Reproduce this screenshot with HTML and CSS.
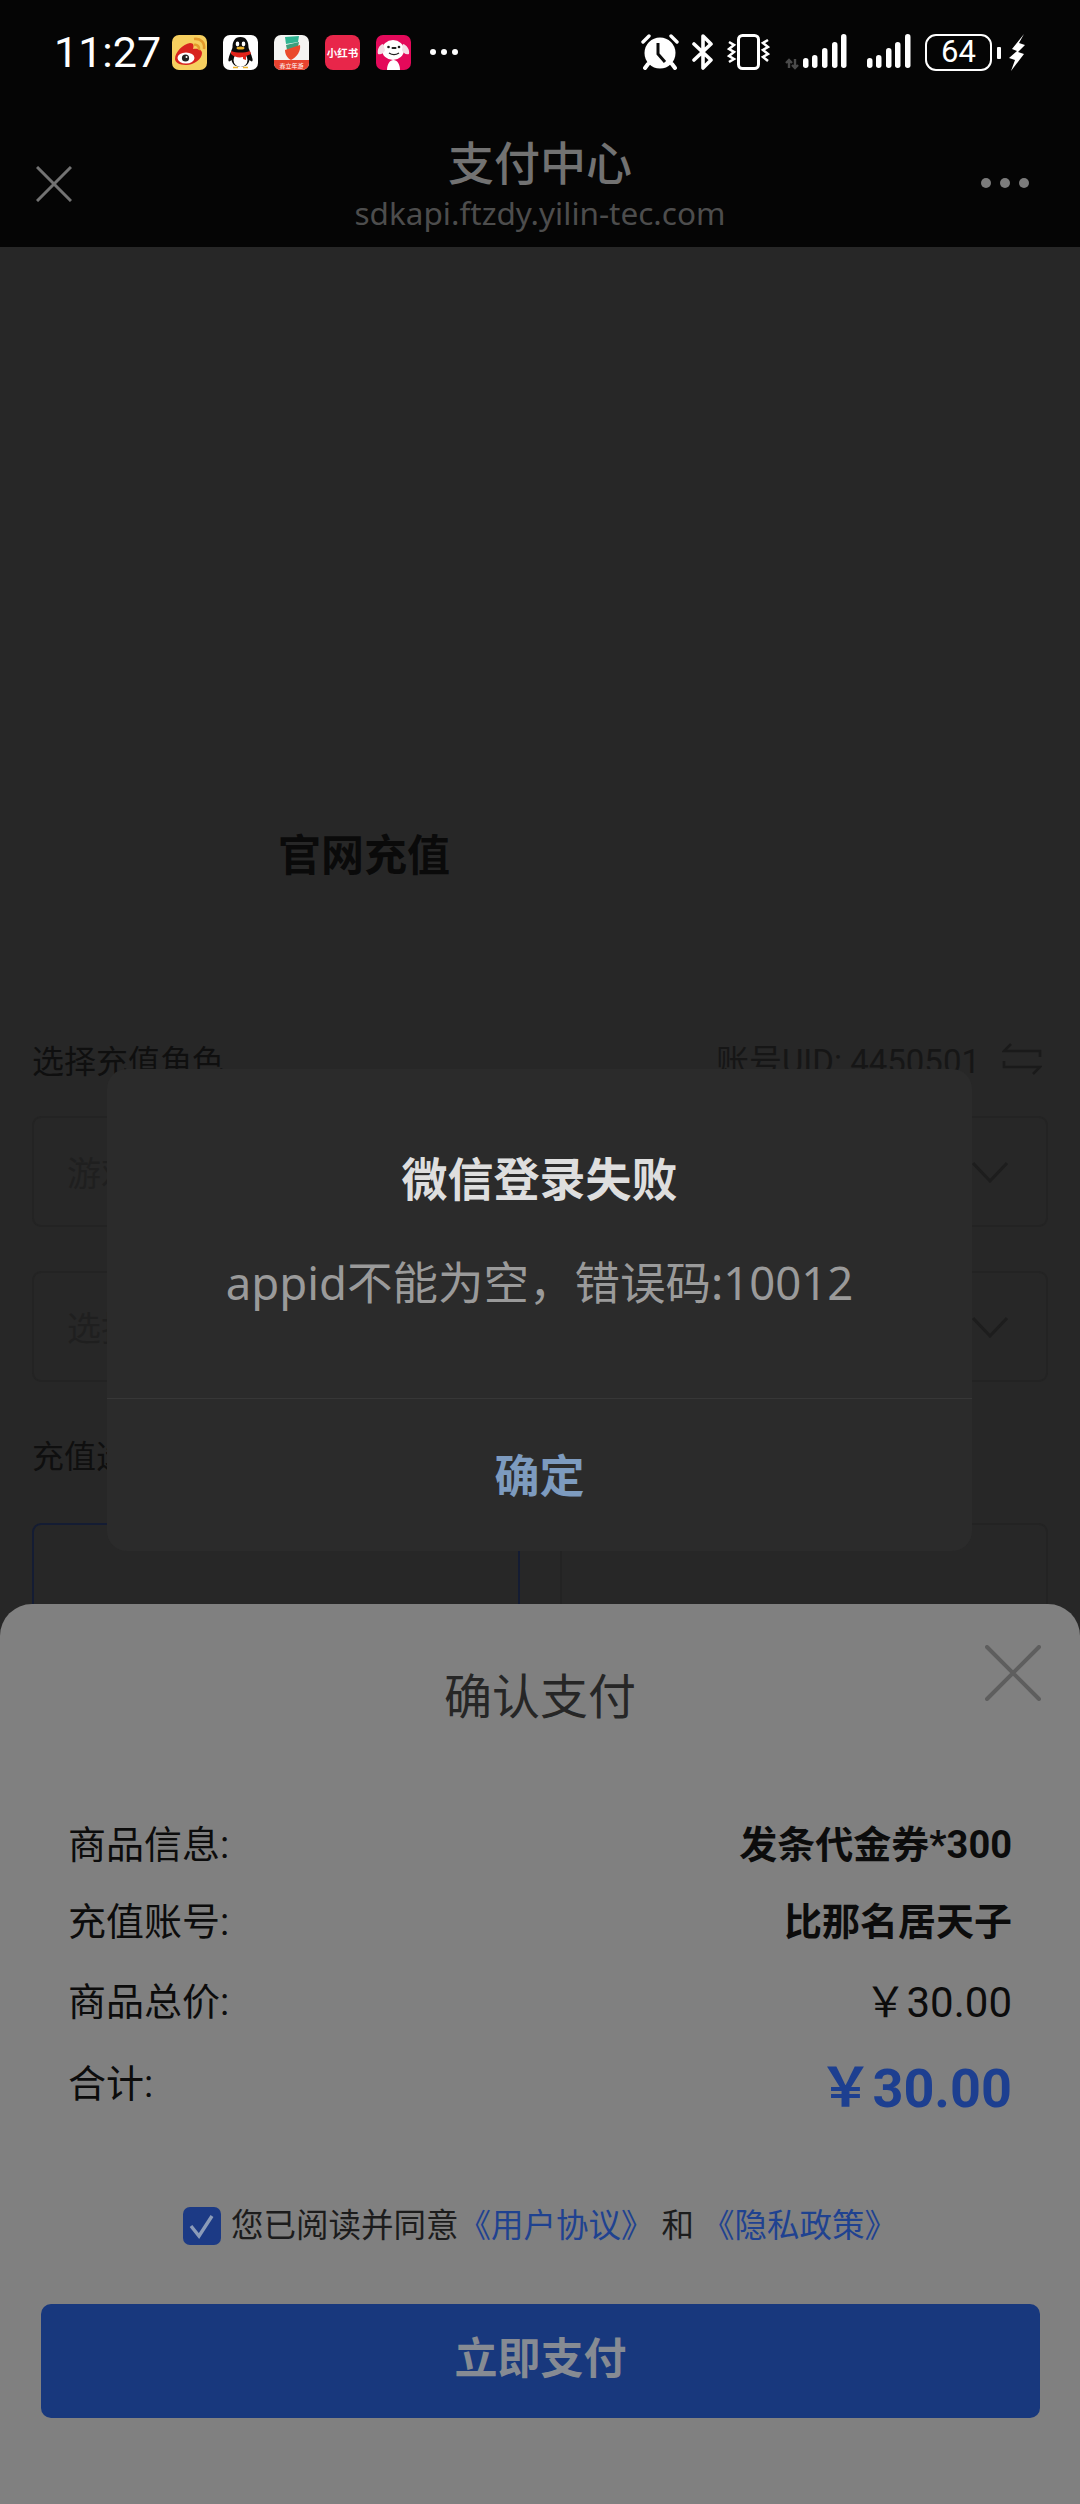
FILE: index.html
```html
<!DOCTYPE html>
<html lang="zh-CN">
<head>
  <meta charset="UTF-8">
  <title>支付中心</title>
  <link rel="stylesheet" href="styles.css">
</head>
<body>
<div class="screen">
  <div class="statusbar">
    <div class="status-left">
      <span class="time">11:27</span>
      <svg class="app" viewBox="0 0 35 35">
        <rect width="35" height="35" rx="7" fill="#f6cf5f"/>
        <path d="M3 24c0-7 8-15 15-16 4 0 4 3 3 6 4-1 9 0 9 4 0 6-8 12-16 12-7 0-11-3-11-6z" fill="#d8231f"/>
        <ellipse cx="14" cy="23" rx="8.500" ry="5.500" fill="#fff"/>
        <circle cx="13.500" cy="23" r="3.600" fill="#222"/>
        <circle cx="14.500" cy="22" r="1" fill="#fff"/>
        <path d="M22 10c3-1 6 2 5 5M22 4c7-1 11 4 10 10" fill="none" stroke="#e59a2c" stroke-width="2.600"/>
      </svg>
      <svg class="app" viewBox="0 0 35 35">
        <rect width="35" height="35" rx="7" fill="#fff"/>
        <path d="M17.500 2c6 0 8 5 8 10 0 2 3 7 4 12 .5 3-1 3-3 1-1 5-5 7-9 7s-8-2-9-7c-2 2-3.500 2-3-1 1-5 4-10 4-12 0-5 2-10 8-10z" fill="#0b0b0b"/>
        <ellipse cx="17.500" cy="25" rx="7" ry="7" fill="#fff"/>
        <ellipse cx="14.500" cy="9" rx="1.800" ry="2.400" fill="#fff"/>
        <ellipse cx="20.500" cy="9" rx="1.800" ry="2.400" fill="#fff"/>
        <ellipse cx="17.500" cy="13" rx="4" ry="1.600" fill="#f0b429"/>
        <path d="M8 16c6 2 13 2 19 0l1 3-5 2v4l-3-1v-2c-4 1-9 0-12-3z" fill="#e2231a"/>
        <path d="M10 32.500h5M20 32.500h5" stroke="#f0b429" stroke-width="1.600"/>
      </svg>
      <svg class="app" viewBox="0 0 35 35">
        <rect width="35" height="35" rx="7" fill="#f4f4f2"/>
        <path d="M0 25h35v3a7 7 0 0 1-7 7H7a7 7 0 0 1-7-7z" fill="#e8432f"/>
        <path d="M11 2l14-1-1 6-12 2z" fill="#2fb592"/>
        <path d="M12 10l13-3-1 5-11 3z" fill="#3d9f7c"/>
        <path d="M11 15l15-5c1 6-3 12-9 15-4-2-6-6-6-10z" fill="#ea4a2c"/>
        <text class="app-tiny" x="17.500" y="33" text-anchor="middle">春立年游</text>
      </svg>
      <svg class="app" viewBox="0 0 35 35">
        <rect width="35" height="35" rx="8" fill="#e8264a"/>
        <text class="app-xhs" x="17.500" y="22" text-anchor="middle">小红书</text>
      </svg>
      <svg class="app" viewBox="0 0 35 35">
        <rect width="35" height="35" rx="7" fill="#e4095a"/>
        <path d="M11 35c0-6 3-10 6.500-10s6.500 4 6.500 10z" fill="#fff"/>
        <ellipse cx="17" cy="15" rx="11" ry="10" fill="#fff"/>
        <path d="M7 9c-4 1-6 6-5 10 3 1 6-1 7-4zM27 9c4 1 7 6 6 10-3 1-6-1-7-4z" fill="#f4dfe6"/>
        <circle cx="12.500" cy="12" r="1.300" fill="#222"/>
        <circle cx="23" cy="12" r="1.300" fill="#222"/>
        <path d="M13 18c3 2 7 2 10 0" fill="none" stroke="#222" stroke-width="1.300"/>
        <rect x="15.500" y="12" width="5" height="2" rx="1" fill="#222"/>
      </svg>
      <span class="more-dots"><i></i><i></i><i></i></span>
    </div>
    <div class="status-right">
      <svg class="ic-alarm" viewBox="0 0 38 36">
        <path d="M2 8l6-6M36 8l-6-6" stroke="#fff" stroke-width="3.400" stroke-linecap="round"/>
        <path d="M7 30l-3 4M31 30l3 4" stroke="#fff" stroke-width="4" stroke-linecap="round"/>
        <circle cx="19" cy="19" r="15.500" fill="#fff"/>
        <path d="M17 9v11l7 8" fill="none" stroke="#0a0a0a" stroke-width="3"/>
      </svg>
      <svg class="ic-bt" viewBox="0 0 22 36">
        <path d="M2 10l17 16-8 8V2l8 8L2 26" fill="none" stroke="#fff" stroke-width="3.600" stroke-linejoin="round" stroke-linecap="round"/>
      </svg>
      <svg class="ic-vib" viewBox="0 0 43 36">
        <rect x="11.500" y="1.500" width="20" height="33" rx="4" fill="none" stroke="#fff" stroke-width="3"/>
        <path d="M2 8l5 3-5 4 5 3-5 4 5 3-5 3M41 6l-5 3 5 4-5 3 5 4-5 3 5 4" fill="none" stroke="#fff" stroke-width="2.600"/>
      </svg>
      <svg class="ic-sig1" viewBox="0 0 64 36">
        <path d="M5 34V26M2 29l3-3 3 3M11 25v9M8 31l3 3 3-3" fill="none" stroke="#4a4a4a" stroke-width="2.400"/>
        <rect x="19" y="24" width="5.500" height="10" rx="2.700" fill="#fff"/>
        <rect x="28" y="21" width="5.500" height="13" rx="2.700" fill="#fff"/>
        <rect x="38" y="14" width="5.500" height="20" rx="2.700" fill="#fff"/>
        <rect x="48" y="8" width="5.500" height="26" rx="2.700" fill="#fff"/>
        <rect x="57" y="0" width="5.500" height="34" rx="2.700" fill="#fff"/>
      </svg>
      <svg class="ic-sig2" viewBox="0 0 45 36">
        <rect x="0" y="24" width="5.500" height="10" rx="2.700" fill="#fff"/>
        <rect x="9" y="21" width="5.500" height="13" rx="2.700" fill="#fff"/>
        <rect x="19" y="14" width="5.500" height="20" rx="2.700" fill="#fff"/>
        <rect x="28" y="8" width="5.500" height="26" rx="2.700" fill="#fff"/>
        <rect x="38" y="0" width="5.500" height="34" rx="2.700" fill="#fff"/>
      </svg>
      <span class="battery">64</span>
      <span class="battery-nub"></span>
      <svg class="ic-bolt" viewBox="0 0 16 37">
        <path d="M15 0L3 15l5 2-8 7 6 2-4 11 13-17-6-2 7-7-6-2z" fill="#fff"/>
      </svg>
    </div>
  </div>

  <div class="navbar">
    <svg class="nav-close" viewBox="0 0 36 36">
      <path d="M1 1l34 34M35 1L1 35" stroke="#737373" stroke-width="3"/>
    </svg>
    <div class="nav-title">
      <div class="nav-name">支付中心</div>
      <div class="nav-url">sdkapi.ftzdy.yilin-tec.com</div>
    </div>
    <span class="nav-dots"><i></i><i></i><i></i></span>
  </div>

  <div class="content">
    <h1 class="page-title">官网充值</h1>
    <div class="role-head">
      <span class="role-label">选择充值角色</span>
      <span class="uid">账号UID: 4450501
        <svg class="swap" viewBox="0 0 40 34">
          <path d="M9 2L2 9h36v6M31 32l7-7H2v-6" fill="none" stroke="#1a1a1a" stroke-width="2.600"/>
        </svg>
      </span>
    </div>
    <div class="select-box"><span>游戏区服</span><svg class="chev" viewBox="0 0 36 22"><path d="M1 2l17 18L35 2" fill="none" stroke="#1d1d1d" stroke-width="3"/></svg></div>
    <div class="select-box"><span>选择角色</span><svg class="chev" viewBox="0 0 36 22"><path d="M1 2l17 18L35 2" fill="none" stroke="#1d1d1d" stroke-width="3"/></svg></div>
    <div class="recharge-label">充值选项</div>
    <div class="options">
      <div class="option active"></div>
      <div class="option"></div>
    </div>
  </div>

  <div class="dialog">
    <div class="dialog-body">
      <div class="dialog-title">微信登录失败</div>
      <div class="dialog-msg">appid不能为空，错误码:10012</div>
    </div>
    <div class="dialog-ok">确定</div>
  </div>

  <div class="sheet">
    <div class="sheet-head">
      <span class="sheet-title">确认支付</span>
      <svg class="sheet-close" viewBox="0 0 56 56">
        <path d="M2 2l52 52M54 2L2 54" stroke="#5e5e5e" stroke-width="4" stroke-linecap="round"/>
      </svg>
    </div>
    <div class="info-row r1"><span>商品信息:</span><b>发条代金券*300</b></div>
    <div class="info-row r2"><span>充值账号:</span><b>比那名居天子</b></div>
    <div class="info-row r3"><span>商品总价:</span><em>￥30.00</em></div>
    <div class="info-row r4"><span>合计:</span><strong>￥30.00</strong></div>
    <div class="agree">
      <svg class="check" viewBox="0 0 38 38">
        <rect width="38" height="38" rx="7" fill="#1c3a85"/>
        <path d="M8 19l8 10L29 9" fill="none" stroke="#8b9bb8" stroke-width="3.400"/>
      </svg>
      <span>您已阅读并同意</span>
      <a>《用户协议》</a>
      <span class="and">和</span>
      <a>《隐私政策》</a>
    </div>
    <div class="pay-btn">立即支付</div>
  </div>
</div>
</body>
</html>
```

FILE: styles.css
```css
* {
  box-sizing: border-box;
}
html, body {
  margin: 0;
  padding: 0;
  background: #000;
}
body {
  font-family: Roboto, "Noto Sans CJK SC", sans-serif;
}
.screen {
  position: relative;
  width: 1080px;
  height: 2504px;
  overflow: hidden;
  background: #272727;
}

/* status bar */
.statusbar {
  height: 104px;
  background: #050505;
  display: flex;
  justify-content: space-between;
  padding: 34px 55px 0 54px;
}
.status-left {
  display: flex;
  height: 36px;
  align-items: center;
}
.time {
  width: 118px;
  color: #fff;
  font-size: 43px;
  line-height: 36px;
}
.app {
  width: 35px;
  height: 35px;
  margin-right: 16px;
}
.app-tiny {
  font-size: 6px;
  fill: #fff;
  font-family: "Noto Sans CJK SC", sans-serif;
}
.app-xhs {
  font-size: 10.500px;
  fill: #fff;
  font-weight: 700;
  font-family: "Noto Sans CJK SC", sans-serif;
}
.more-dots {
  display: flex;
  gap: 5px;
  margin-left: 3px;
}
.more-dots i {
  width: 6px;
  height: 6px;
  border-radius: 50%;
  background: #fff;
}
.status-right {
  display: flex;
  height: 37px;
  align-items: flex-start;
}
.ic-alarm {
  width: 38px;
  height: 36px;
}
.ic-bt {
  width: 22px;
  height: 36px;
  margin-left: 13px;
}
.ic-vib {
  width: 43px;
  height: 36px;
  margin-left: 13px;
}
.ic-sig1 {
  width: 64px;
  height: 36px;
  margin-left: 14px;
}
.ic-sig2 {
  width: 45px;
  height: 36px;
  margin-left: 19px;
}
.battery {
  width: 67px;
  height: 37px;
  margin-left: 13px;
  border: 2.500px solid #fff;
  border-radius: 11px;
  color: #fff;
  font-size: 31px;
  line-height: 32px;
  text-align: center;
}
.battery-nub {
  width: 4px;
  height: 12px;
  margin: 13px 0 0 5px;
  border-radius: 1px;
  background: #fff;
}
.ic-bolt {
  width: 16px;
  height: 37px;
  margin-left: 8px;
}

/* nav */
.navbar {
  height: 143px;
  background: #050505;
  display: grid;
  grid-template-columns: 1fr auto 1fr;
  align-items: start;
  padding: 0 36px;
}
.nav-close {
  width: 36px;
  height: 36px;
  margin-top: 62px;
}
.nav-title {
  text-align: center;
  margin-top: 32px;
}
.nav-name {
  color: #727272;
  font-size: 46px;
  line-height: 56px;
  font-weight: 500;
}
.nav-url {
  color: #4d4d4d;
  font-size: 31.500px;
  line-height: 40px;
  font-family: "Noto Sans", sans-serif;
  margin-top: 1px;
}
.nav-dots {
  display: flex;
  gap: 9px;
  justify-self: end;
  margin: 74px 15px 0 0;
}
.nav-dots i {
  width: 10px;
  height: 10px;
  border-radius: 50%;
  background: #7c7c7c;
}

/* page behind the dialogs */
.content {
  padding: 0 32px;
}
.page-title {
  margin: 0 0 0 246px;
  padding-top: 579px;
  color: #0a0a0a;
  font-size: 43px;
  line-height: 60px;
  font-weight: 700;
}
.role-head {
  display: flex;
  justify-content: space-between;
  margin-top: 154px;
  color: #0f0f0f;
  font-size: 32px;
  line-height: 44px;
}
.uid {
  display: flex;
  gap: 22px;
  color: #161616;
  font-size: 33px;
  padding-right: 6px;
}
.swap {
  width: 40px;
  height: 34px;
  margin-top: 2px;
}
.select-box {
  height: 111px;
  margin-top: 32px;
  border: 2px solid #232323;
  border-radius: 9px;
  padding: 0 38px 0 33px;
  display: flex;
  align-items: center;
  justify-content: space-between;
  color: #1f1f1f;
  font-size: 34px;
}
.select-box + .select-box {
  margin-top: 44px;
}
.chev {
  width: 36px;
  height: 22px;
}
.recharge-label {
  margin-top: 53px;
  color: #0f0f0f;
  font-size: 32px;
  line-height: 44px;
}
.options {
  display: grid;
  grid-template-columns: 488px 488px;
  justify-content: space-between;
  margin-top: 44px;
}
.option {
  height: 120px;
  border: 2px solid #232323;
  border-radius: 9px;
}
.option.active {
  border-color: #141c33;
}

/* error dialog */
.dialog {
  position: absolute;
  left: 107px;
  top: 1069px;
  width: 865px;
  height: 482px;
  background: #2b2b2b;
  border-radius: 20px;
  text-align: center;
}
.dialog-body {
  height: 330px;
  border-bottom: 1px solid #373737;
  padding-top: 79px;
}
.dialog-title {
  color: #dedede;
  font-size: 46px;
  line-height: 64px;
  font-weight: 700;
}
.dialog-msg {
  margin-top: 38px;
  color: #9a9a9a;
  font-size: 45.500px;
  line-height: 64px;
  font-family: "Noto Sans", "Noto Sans CJK SC", sans-serif;
}
.dialog-ok {
  margin-top: 48px;
  color: #7d9bbf;
  font-size: 45px;
  line-height: 62px;
  font-weight: 700;
}

/* payment sheet */
.sheet {
  position: absolute;
  left: 0;
  top: 1604px;
  width: 1080px;
  height: 900px;
  background: #808080;
  border-radius: 32px 32px 0 0;
}
.sheet-head {
  position: relative;
  padding-top: 60px;
  text-align: center;
}
.sheet-title {
  color: #262626;
  font-size: 48px;
  line-height: 68px;
}
.sheet-close {
  position: absolute;
  right: 39px;
  top: 41px;
  width: 56px;
  height: 56px;
}
.info-row {
  display: flex;
  justify-content: space-between;
  align-items: center;
  padding: 0 68px;
  height: 56px;
  color: #0c0c0c;
  font-size: 38px;
}
.info-row b {
  font-weight: 700;
}
.info-row em {
  font-style: normal;
  font-size: 42px;
}
.info-row strong {
  color: #1d3f90;
  font-size: 54px;
  font-weight: 700;
}
.r1 {
  margin-top: 81px;
}
.r2 {
  margin-top: 21px;
}
.r3 {
  margin-top: 24px;
}
.r4 {
  margin-top: 29px;
}
.r4 span {
  margin-top: -6px;
}
.agree {
  display: flex;
  align-items: center;
  margin-top: 96px;
  padding-left: 183px;
  color: #1c1c1c;
  font-size: 32.500px;
  line-height: 38px;
}
.check {
  width: 38px;
  height: 38px;
  margin-right: 10px;
}
.agree a {
  color: #1f4290;
}
.agree .and {
  margin: 0 8px 0 8px;
}
.pay-btn {
  margin: 59px 40px 0 41px;
  height: 114px;
  background: #18387d;
  border-radius: 10px;
  color: #868b93;
  font-size: 43px;
  line-height: 110px;
  font-weight: 700;
  text-align: center;
}
```
